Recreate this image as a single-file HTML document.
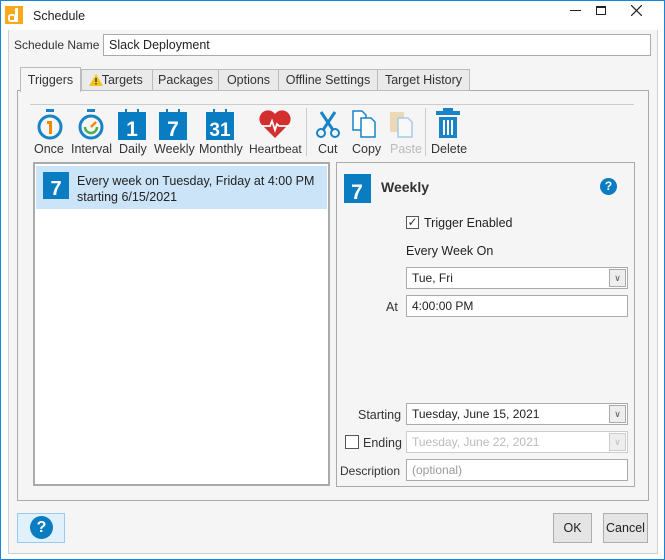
<!DOCTYPE html>
<html><head><style>
*{box-sizing:border-box;margin:0;padding:0}
body{width:665px;height:560px;overflow:hidden;font-family:"Liberation Sans",sans-serif;font-size:12px;color:#222;background:#fff;position:relative}
.a{position:absolute}
.win{left:0;top:0;width:665px;height:560px;border:1px solid #1883d7;}
.inner{left:8px;top:30px;width:650px;height:524px;border:1px solid #d0d0d0;border-top:none;background:#f5f5f5}
.inp{background:#fff;border:1px solid #aaa;height:22px;padding:3px 5px;white-space:nowrap}
.tab{top:69px;height:22px;border:1px solid #bbb;background:#eaeaea;text-align:center;line-height:20px;font-size:12.5px;color:#333}
.tb{text-align:center;font-size:12.5px;color:#333;top:142px}
.drop{right:0;top:0;width:17px;height:18px;margin:1px;border:1px solid #aaa;background:#eee;position:absolute;text-align:center;font-size:9px;line-height:16px;color:#555}
.lbl{font-size:12.5px;color:#333;text-align:right}
.btn{border:1px solid #adadad;background:#e5e5e5;text-align:center;line-height:28px;font-size:12.5px}
</style></head><body>
<div class="a win"></div>
<div class="a inner"></div>
<svg class="a" style="left:5px;top:6px" width="18" height="18"><rect width="18" height="18" fill="#f7a81b"/><rect x="3" y="8" width="8" height="8" rx="3" fill="#fff"/><rect x="10" y="2" width="3" height="14" fill="#fff"/><rect x="5" y="10" width="4" height="4" fill="#f7a81b"/></svg>
<div class="a" style="left:33px;top:9px;font-size:12.5px">Schedule</div>
<div class="a" style="left:570px;top:10px;width:11px;border-top:1px solid #222"></div>
<div class="a" style="left:596px;top:6px;width:10px;height:9px;border:1px solid #222;border-top-width:2px"></div>
<svg class="a" style="left:631px;top:5px" width="11" height="11"><path d="M0 0L11 11M11 0L0 11" stroke="#222" stroke-width="1.2"/></svg>
<div class="a lbl" style="left:14px;top:38px;font-size:12px">Schedule Name</div>
<div class="a inp" style="left:103px;top:34px;width:548px;font-size:12.5px">Slack Deployment</div>
<div class="a" style="left:17px;top:90px;width:632px;height:411px;border:1px solid #aaa;background:#f5f5f5"></div>
<div class="a tab" style="left:81px;width:72px">&nbsp;&nbsp;&nbsp;Targets</div>
<svg class="a" style="left:89px;top:74px" width="14" height="12"><path d="M7 0L14 12H0Z" fill="#f5c518"/><rect x="6.3" y="4" width="1.4" height="4" fill="#333"/><rect x="6.3" y="9" width="1.4" height="1.4" fill="#333"/></svg>
<div class="a tab" style="left:152px;width:67px">Packages</div>
<div class="a tab" style="left:218px;width:61px">Options</div>
<div class="a tab" style="left:278px;width:100px">Offline Settings</div>
<div class="a tab" style="left:377px;width:93px">Target History</div>
<div class="a tab" style="left:20px;top:67px;width:61px;height:25px;background:#f5f5f5;border-bottom:none;line-height:24px">Triggers</div>
<div class="a" style="left:30px;top:104px;width:604px;border-top:1px solid #ccc"></div>
<div class="a" style="left:306px;top:108px;height:48px;border-left:1px solid #ccc"></div>
<div class="a" style="left:425px;top:108px;height:48px;border-left:1px solid #ccc"></div>
<svg class="a" style="left:36px;top:109px" width="28" height="32"><rect x="10" y="0" width="8" height="3" fill="#1883c8"/><circle cx="14" cy="18" r="11" fill="none" stroke="#1883c8" stroke-width="3"/><path d="M11 12h5v13h-3v-10h-2z" fill="#f08a00"/></svg>
<svg class="a" style="left:77px;top:109px" width="28" height="32"><rect x="10" y="0" width="8" height="3" fill="#1883c8"/><circle cx="14" cy="18" r="11" fill="none" stroke="#1883c8" stroke-width="3"/><path d="M8 18a6 6 0 0 0 12 0" fill="none" stroke="#4caf50" stroke-width="2.5"/><path d="M14 18l5-5" stroke="#f08a00" stroke-width="2.5"/></svg>
<svg class="a" style="left:118px;top:109px" width="28" height="32"><rect x="0" y="3" width="28" height="28" fill="#0a7cc1"/><text x="14" y="27" font-size="21" font-weight="bold" fill="#fff" text-anchor="middle" font-family="Liberation Sans">1</text><rect x="7" y="0" width="2" height="5" fill="#0a7cc1"/><rect x="19" y="0" width="2" height="5" fill="#0a7cc1"/></svg>
<svg class="a" style="left:159px;top:109px" width="28" height="32"><rect x="0" y="3" width="28" height="28" fill="#0a7cc1"/><text x="14" y="27" font-size="21" font-weight="bold" fill="#fff" text-anchor="middle" font-family="Liberation Sans">7</text><rect x="7" y="0" width="2" height="5" fill="#0a7cc1"/><rect x="19" y="0" width="2" height="5" fill="#0a7cc1"/></svg>
<svg class="a" style="left:206px;top:109px" width="28" height="32"><rect x="0" y="3" width="28" height="28" fill="#0a7cc1"/><text x="14" y="27" font-size="19" font-weight="bold" fill="#fff" text-anchor="middle" font-family="Liberation Sans">31</text><rect x="7" y="0" width="2" height="5" fill="#0a7cc1"/><rect x="19" y="0" width="2" height="5" fill="#0a7cc1"/></svg>
<svg class="a" style="left:259px;top:110px" width="32" height="28"><path d="M16 28L2 14A8 8 0 0 1 16 4A8 8 0 0 1 30 14Z" fill="#d32f2f"/><path d="M2 16h9l2-5 3 9 2-6 2 2h10" fill="none" stroke="#fff" stroke-width="1.8"/></svg>
<svg class="a" style="left:315px;top:110px" width="26" height="28"><path d="M6 2l12 18M20 2L8 20" stroke="#1883c8" stroke-width="3"/><circle cx="6" cy="23" r="4" fill="none" stroke="#1883c8" stroke-width="2"/><circle cx="20" cy="23" r="4" fill="none" stroke="#1883c8" stroke-width="2"/></svg>
<svg class="a" style="left:352px;top:110px" width="28" height="28"><path d="M1 1h9l4 4v15H1z" fill="#fff" stroke="#1883c8" stroke-width="1.5"/><path d="M9 8h10l4 4v15H9z" fill="#fff" stroke="#1883c8" stroke-width="1.5"/></svg>
<svg class="a" style="left:389px;top:110px" width="28" height="28" opacity="0.35"><rect x="1" y="2" width="14" height="20" fill="#d9a441"/><path d="M9 8h10l4 4v15H9z" fill="#fff" stroke="#1883c8" stroke-width="1.5"/></svg>
<svg class="a" style="left:435px;top:108px" width="26" height="32"><rect x="8" y="0" width="10" height="3" fill="#1883c8"/><rect x="1" y="3" width="24" height="4" fill="#1883c8"/><rect x="4" y="9" width="18" height="21" fill="#1883c8"/><rect x="8" y="12" width="2" height="15" fill="#fff"/><rect x="12" y="12" width="2" height="15" fill="#fff"/><rect x="16" y="12" width="2" height="15" fill="#fff"/></svg>
<div class="a tb" style="left:34px">Once</div>
<div class="a tb" style="left:71px">Interval</div>
<div class="a tb" style="left:119px">Daily</div>
<div class="a tb" style="left:154px">Weekly</div>
<div class="a tb" style="left:199px">Monthly</div>
<div class="a tb" style="left:249px;font-size:12px">Heartbeat</div>
<div class="a tb" style="left:318px">Cut</div>
<div class="a tb" style="left:352px">Copy</div>
<div class="a tb" style="left:390px;color:#bbb">Paste</div>
<div class="a tb" style="left:431px">Delete</div>
<div class="a" style="left:33px;top:162px;width:297px;height:324px;border:2px solid #aaa;background:#fff"></div>
<div class="a" style="left:36px;top:166px;width:291px;height:43px;background:#cce4f7"></div>
<svg class="a" style="left:43px;top:168px" width="26" height="32"><rect x="0" y="4" width="26" height="27" fill="#0a7cc1"/><text x="13" y="27" font-size="20" font-weight="bold" fill="#fff" text-anchor="middle" font-family="Liberation Sans">7</text></svg>
<div class="a" style="left:77px;top:173px;font-size:12.5px;line-height:16px">Every week on Tuesday, Friday at 4:00 PM<br>starting 6/15/2021</div>
<div class="a" style="left:336px;top:162px;width:299px;height:325px;border:1px solid #aaa;background:#f5f5f5"></div>
<svg class="a" style="left:344px;top:170px" width="28" height="34"><rect x="0" y="4" width="27" height="29" fill="#0a7cc1"/><text x="13" y="29" font-size="21" font-weight="bold" fill="#fff" text-anchor="middle" font-family="Liberation Sans">7</text></svg>
<div class="a" style="left:381px;top:179px;font-size:14px;font-weight:bold;color:#333">Weekly</div>
<div class="a" style="left:600px;top:178px;width:17px;height:17px;border-radius:50%;background:#0a7cc1;color:#fff;font-weight:bold;font-size:12px;text-align:center;line-height:17px">?</div>
<div class="a" style="left:406px;top:216px;width:13px;height:13px;border:1px solid #555;background:#fff;font-size:12px;line-height:11px;text-align:center;color:#333">&#10003;</div>
<div class="a" style="left:424px;top:216px;font-size:12.5px">Trigger Enabled</div>
<div class="a" style="left:406px;top:244px;font-size:12.5px">Every Week On</div>
<div class="a inp" style="left:406px;top:267px;width:222px">Tue, Fri<div class="drop">&#8744;</div></div>
<div class="a lbl" style="left:386px;top:300px">At</div>
<div class="a inp" style="left:406px;top:295px;width:222px">4:00:00 PM</div>
<div class="a lbl" style="left:358px;top:408px">Starting</div>
<div class="a inp" style="left:406px;top:403px;width:222px">Tuesday, June 15, 2021<div class="drop">&#8744;</div></div>
<div class="a" style="left:345px;top:435px;width:14px;height:14px;border:1px solid #555;background:#fff"></div>
<div class="a lbl" style="left:363px;top:436px">Ending</div>
<div class="a inp" style="left:406px;top:431px;width:222px;color:#bbb;border-color:#ccc">Tuesday, June 22, 2021<div class="drop" style="color:#bbb;border-color:#ccc">&#8744;</div></div>
<div class="a lbl" style="left:340px;top:464px;font-size:12px">Description</div>
<div class="a inp" style="left:406px;top:459px;width:222px;color:#999">(optional)</div>
<div class="a" style="left:17px;top:513px;width:48px;height:30px;border:1px solid #99c9ee;background:#e0f0fc"></div>
<div class="a" style="left:30px;top:516px;width:23px;height:23px;border-radius:50%;background:#0a7cc1;color:#fff;font-weight:bold;font-size:16px;text-align:center;line-height:23px">?</div>
<div class="a btn" style="left:553px;top:513px;width:39px;height:30px">OK</div>
<div class="a btn" style="left:603px;top:513px;width:45px;height:30px">Cancel</div>
</body></html>
